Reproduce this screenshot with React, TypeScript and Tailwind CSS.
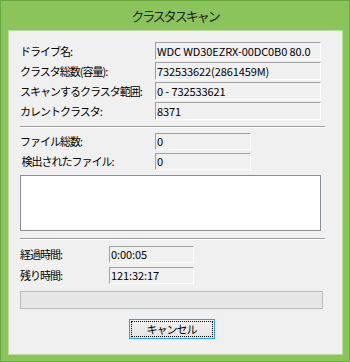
const jp = { fontFamily: '"Noto Sans CJK JP", "Noto Sans", sans-serif' };

function Field({ value, width, height }: { value: string; width: string; height: string }) {
  return (
    <div
      className={`${width} ${height} flex items-center overflow-hidden whitespace-nowrap border border-t-[#a0a0a0] border-l-[#a0a0a0] border-b-white border-r-white bg-[#f0f0f0] pl-[1px] text-[11px] tracking-[-0.1px] leading-none text-black`}
      style={jp}
    >
      {value}
    </div>
  );
}

function Row({
  label,
  value,
  labelWidth,
  width,
  height,
}: {
  label: string;
  value: string;
  labelWidth: string;
  width: string;
  height: string;
}) {
  return (
    <div className="flex items-center">
      <div className={`${labelWidth} text-[11px] tracking-[-1px] leading-none text-black whitespace-pre`} style={jp}>
        {label}
      </div>
      <Field value={value} width={width} height={height} />
    </div>
  );
}

function Separator({ className }: { className: string }) {
  return <div className={`${className} h-[2px] border-t border-t-[#a0a0a0] border-b border-b-white`} />;
}

export default function App() {
  return (
    <div className="w-[350px] h-[362px] bg-[#8ac45a] border border-[#6aa843] flex flex-col">
      <div className="h-[29px] flex items-center justify-center text-[13px] tracking-[-2px] text-[#222] pt-[1px]" style={jp}>
        クラスタスキャン
      </div>
      <div className="ml-[7px] mr-[6px] h-[325px] bg-[#f0f0f0] border border-[#b9dca0] flex flex-col pl-[11px] pt-[11px]">
        <div className="flex flex-col gap-[2px]">
          <Row label="ドライブ名:" value="WDC WD30EZRX-00DC0B0 80.0" labelWidth="w-[135px]" width="w-[166px]" height="h-[18px]" />
          <Row label="クラスタ総数(容量):" value="732533622(2861459M)" labelWidth="w-[135px]" width="w-[166px]" height="h-[18px]" />
          <Row label="スキャンするクラスタ範囲:" value="0 - 732533621" labelWidth="w-[135px]" width="w-[166px]" height="h-[18px]" />
          <Row label="カレントクラスタ:" value="8371" labelWidth="w-[135px]" width="w-[166px]" height="h-[18px]" />
        </div>
        <Separator className="mt-[6px] w-[305px]" />
        <div className="mt-[5px] flex flex-col gap-[3px]">
          <Row label="ファイル総数:" value="0" labelWidth="w-[135px]" width="w-[96px]" height="h-[17px]" />
          <Row label=" 検出されたファイル:" value="0" labelWidth="w-[135px]" width="w-[96px]" height="h-[17px]" />
        </div>
        <div className="mt-[5px] w-[301px] h-[56px] bg-white border border-[#888d96]" />
        <Separator className="mt-[7px] w-[305px]" />
        <div className="mt-[6px] flex flex-col gap-[4px]">
          <Row label="経過時間:" value="0:00:05" labelWidth="w-[89px]" width="w-[85px]" height="h-[17px]" />
          <Row label="残り時間:" value="121:32:17" labelWidth="w-[89px]" width="w-[85px]" height="h-[17px]" />
        </div>
        <div className="mt-[7px] w-[303px] h-[18px] bg-[#e6e6e6] border border-[#bcbcbc]" />
        <div className="mt-[10px] w-[303px] flex justify-center">
          <button className="w-[86px] h-[20px] border border-[#3399ff] bg-gradient-to-b from-[#f2f2f2] to-[#e3e3e3] p-[1px] flex">
            <span
              className="flex-1 border border-dotted border-black flex items-center justify-center text-[11px] tracking-[-1px] leading-none text-black"
              style={jp}
            >
              キャンセル
            </span>
          </button>
        </div>
      </div>
    </div>
  );
}
